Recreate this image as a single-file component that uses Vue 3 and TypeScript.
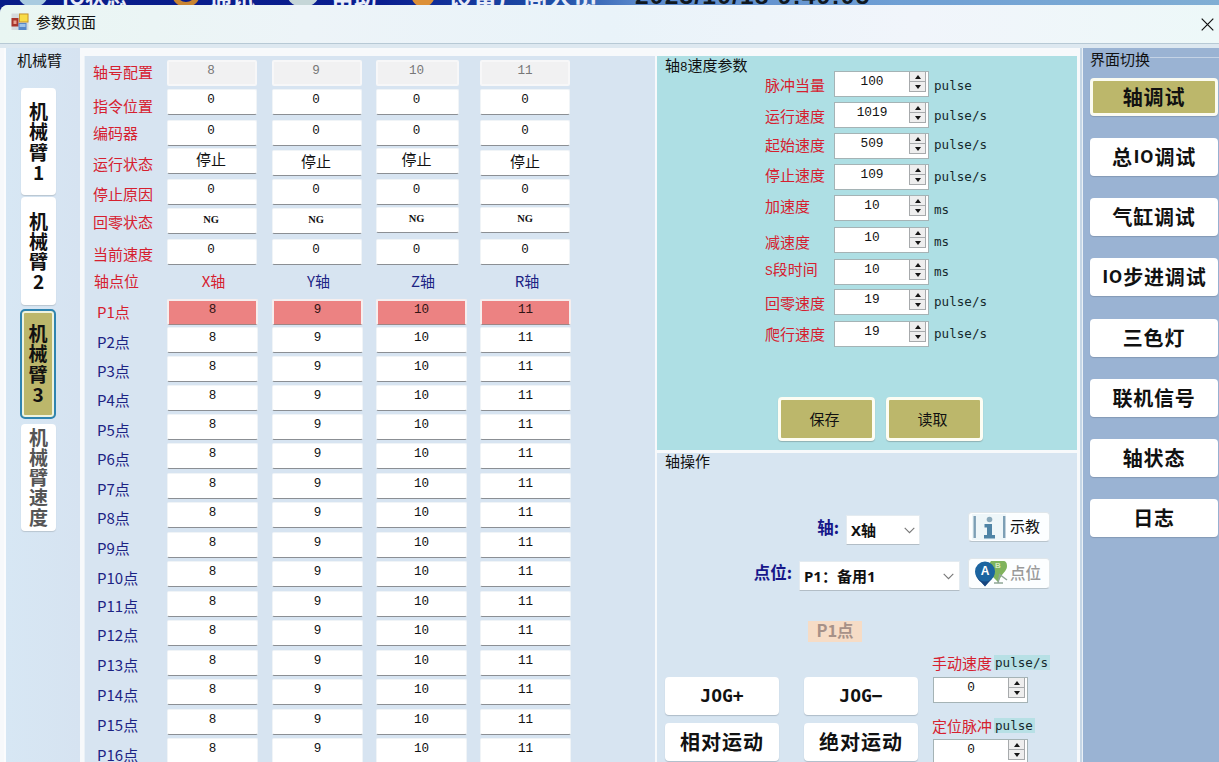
<script setup lang="ts">
interface Placed { text: string; gap: number; kind: string }

/* Turns a list of start offsets into the gaps between stacked boxes. */
function stack(texts: string[], starts: number[], height: number, origin: number, kinds: string[] = []): Placed[] {
  let end = origin
  return texts.map((text, i) => {
    const gap = starts[i] - end
    end = starts[i] + height
    return { text, gap, kind: kinds[i] ?? '' }
  })
}

/* Splits a caption into Latin and Chinese runs. */
function runs(text: string) {
  return (text.match(/[\x20-\x7e]+|[^\x20-\x7e]+/g) ?? []).map(t => ({ t, latin: /^[\x20-\x7e]/.test(t) }))
}

const gap = (n: number) => ({ marginTop: n + 'px' })

const points = Array.from({ length: 16 }, (_, i) => `P${i + 1}点`)
const labels = stack(
  ['轴号配置', '指令位置', '编码器', '运行状态', '停止原因', '回零状态', '当前速度', '轴点位', ...points],
  [72, 106, 133, 164, 194, 222, 254, 281, 312, 342, 371, 400, 430, 459, 489, 518, 548, 578, 606, 635, 665, 695, 725, 755].map(y => y - 10),
  20, 56,
  [...Array(7).fill('red'), 'red in', 'red in2', ...Array(15).fill('navy in2')],
)

const pointTops = [299, 327, 356, 385, 414, 443, 473, 502, 532, 561, 591, 620, 650, 679, 709, 738]
function column(no: string, tops: number[]): Placed[] {
  return stack([no, '0', '0', '停止', '0', 'NG', '0'], tops, 26, 56, ['off'])
}
const columns = [
  { id: 'x', axis: 'X轴', no: '8', top: column('8', [60, 89, 120, 148, 179, 208, 239]) },
  { id: 'y', axis: 'Y轴', no: '9', top: column('9', [60, 89, 120, 150, 179, 208, 239]) },
  { id: 'z', axis: 'Z轴', no: '10', top: column('10', [60, 89, 120, 148, 179, 207, 239]) },
  { id: 'r', axis: 'R轴', no: '11', top: column('11', [60, 89, 120, 150, 179, 207, 239]) },
].map(c => ({
  ...c,
  points: stack(points.map(() => c.no), pointTops, 26, 265 + 31, ['hot']),
}))

const arms = [
  { chars: [...'机械臂1'], cls: 'a1' },
  { chars: [...'机械臂2'], cls: 'a2' },
  { chars: [...'机械臂3'], cls: 'a3' },
  { chars: [...'机械臂速度'], cls: 'a4' },
]

const speedLabels = stack(
  ['脉冲当量', '运行速度', '起始速度', '停止速度', '加速度', '减速度', 'S段时间', '回零速度', '爬行速度'],
  [85, 116, 145, 175, 206, 242, 269, 303, 334].map(y => y - 10), 20, 56,
)
const speedInputs = stack(
  ['100', '1019', '509', '109', '10', '10', '10', '19', '19'],
  [71, 102, 133, 164, 195, 227, 259, 289, 321], 26, 56,
)
const speedUnits = stack(
  ['pulse', 'pulse/s', 'pulse/s', 'pulse/s', 'ms', 'ms', 'ms', 'pulse/s', 'pulse/s'],
  [86, 116, 145, 177, 210, 242, 272, 302, 334].map(y => y - 10), 20, 56,
)

const pages = stack(
  ['轴调试', '总IO调试', '气缸调试', 'IO步进调试', '三色灯', '联机信号', '轴状态', '日志'],
  [78, 138, 198, 258, 319, 379, 439, 499], 38, 68, ['on'],
)
</script>

<template>
  <div class="screen">
    <div class="backbar">
      <i class="blob b1"></i><span class="m1">IO状态</span>
      <i class="blob b2"></i><span class="m2">通讯</span>
      <i class="blob b3"></i><span class="m3">帮助</span>
      <i class="blob b4"></i><span class="m4">设备厂商人员</span>
      <span class="clock">2023/10/18 9:49:05</span>
    </div>
    <div class="window">
      <header class="title">
        <svg class="logo" width="18" height="18" viewBox="0 0 18 18">
          <rect x=".5" y=".5" width="17" height="16.500" fill="#d5dadd" />
          <rect x="8" y=".5" width="9.500" height="9" fill="#c9962a" />
          <rect x="9" y="1.500" width="7.500" height="7" fill="#f8dc48" />
          <rect x=".5" y="5" width="7" height="8.500" fill="#a8352c" />
          <rect x="2.500" y="7.500" width="3" height="3.500" fill="#e7a08f" />
          <rect x="7.500" y="10" width="8" height="7" fill="#5687c8" />
          <rect x="8.500" y="11" width="6" height="3" fill="#9fc2e8" />
        </svg>
        <span>参数页面</span>
        <svg class="close" width="13" height="13" viewBox="0 0 13 13"><path d="M.7.7l11.6 11.6M12.3.7L.7 12.3" stroke="#111" stroke-width="1.2" fill="none" /></svg>
      </header>

      <main class="body">
        <aside class="arms">
          <div class="caption">机械臂</div>
          <button v-for="a in arms" :key="a.cls" class="arm" :class="a.cls">
            <span v-for="(c, i) in a.chars" :key="i">{{ c }}</span>
          </button>
        </aside>

        <section class="table">
          <div class="labels">
            <div v-for="l in labels" :key="l.text" class="label" :class="l.kind" :style="gap(l.gap)">{{ l.text }}</div>
          </div>
          <div v-for="c in columns" :key="c.id" class="col" :class="'col-' + c.id">
            <div v-for="(f, i) in c.top" :key="i" class="field upper" :class="[f.kind, { cn: f.text === '停止', ng: f.text === 'NG' }]" :style="gap(f.gap)">{{ f.text }}</div>
            <div class="axis">{{ c.axis }}</div>
            <div v-for="(f, i) in c.points" :key="'p' + i" class="field" :class="f.kind" :style="gap(f.gap)">{{ f.text }}</div>
          </div>
        </section>

        <section class="center">
          <div class="speed">
            <div class="group-name">轴<i>8</i>速度参数</div>
            <div class="speed-labels">
              <div v-for="l in speedLabels" :key="l.text" class="red line" :style="gap(l.gap)"><span v-for="(r, j) in runs(l.text)" :key="j" :class="{ small: r.latin }">{{ r.t }}</span></div>
            </div>
            <div class="speed-inputs">
              <div v-for="(f, i) in speedInputs" :key="i" class="spin" :style="gap(f.gap)">
                <span>{{ f.text }}</span>
                <div class="arrows"><b class="up"></b><b class="down"></b></div>
              </div>
            </div>
            <div class="speed-units">
              <div v-for="(u, i) in speedUnits" :key="i" class="unit line" :style="gap(u.gap)">{{ u.text }}</div>
            </div>
            <div class="speed-actions">
              <button class="olive">保存</button>
              <button class="olive">读取</button>
            </div>
          </div>

          <div class="ops">
            <div class="ops-name">轴操作</div>
            <div class="ops-row row-axis">
              <label>轴:</label>
              <div class="select sel-axis"><span>X轴</span><svg width="11" height="7" viewBox="0 0 11 7"><path d="M.7.8l4.8 4.8L10.300.8" fill="none" stroke="#777" stroke-width="1.1" /></svg></div>
              <button class="tool">
                <svg width="36" height="26" viewBox="0 0 36 26">
                  <rect x="0" y="0" width="34" height="26" fill="#eef6f9" />
                  <rect x="1.500" y="2" width="2.400" height="22" fill="#7d9fb5" />
                  <rect x="31" y="2" width="2.400" height="22" fill="#7d9fb5" />
                  <circle cx="17.500" cy="5.500" r="2.800" fill="#8aa9bb" />
                  <path d="M12.500 10h7.500v11h3v3.500H12V21h3v-7.500h-2.500z" fill="#4f84a6" />
                </svg>
                <span>示教</span>
              </button>
            </div>
            <div class="ops-row row-point">
              <label>点位:</label>
              <div class="select sel-point"><span>P1：备用1</span><svg width="11" height="7" viewBox="0 0 11 7"><path d="M.7.8l4.8 4.8L10.300.8" fill="none" stroke="#777" stroke-width="1.1" /></svg></div>
              <button class="tool dim">
                <svg width="36" height="27" viewBox="0 0 36 27">
                  <path d="M19 1h12c3 0 4 2 4 5 0 4-3 6-5 9l-4 7-5-5c-3-5-6-12-2-16z" fill="#7fb35c" />
                  <path d="M27 14l8 6M28 14l-2 9M22 23h9" stroke="#8fa697" stroke-width="1.500" fill="none" />
                  <path d="M13 26l-4-4C5 19 3 15 3 11.500a10 10 0 0 1 20 0c0 4-2 7-6 10z" fill="#1b64a0" />
                  <path d="M4.500 15.500a9 9 0 0 0 17 0c-1 3-3 5-5 7l-3.500 4-4-4.500c-2-1-4-4-4.500-6.500z" fill="#17457e" />
                  <text x="13" y="15" text-anchor="middle" class="pin">A</text>
                  <text x="26" y="8" text-anchor="middle" class="pin2">B</text>
                </svg>
                <span>点位</span>
              </button>
            </div>
            <div class="badge">P1点</div>
            <div class="moves">
              <div class="move-grid">
                <button class="big"><span class="jog">JOG+</span></button>
                <button class="big"><span class="jog">JOG−</span></button>
                <button class="big">相对运动</button>
                <button class="big">绝对运动</button>
              </div>
              <div class="manual">
                <div class="manual-name"><span class="red">手动速度</span><span class="unit tag">pulse/s</span></div>
                <div class="spin"><span>0</span><div class="arrows"><b class="up"></b><b class="down"></b></div></div>
                <div class="manual-name second"><span class="red">定位脉冲</span><span class="unit tag">pulse</span></div>
                <div class="spin"><span>0</span><div class="arrows"><b class="up"></b><b class="down"></b></div></div>
              </div>
            </div>
          </div>
        </section>

        <nav class="pages">
          <div class="pages-name"><span>界面切换</span></div>
          <button v-for="p in pages" :key="p.text" class="page" :class="p.kind" :style="gap(p.gap)">
            <span v-for="(r, j) in runs(p.text)" :key="j" :class="{ latin: r.latin }">{{ r.t }}</span>
          </button>
        </nav>
      </main>
    </div>
  </div>
</template>

<style>
body { margin: 0; overflow: hidden; }
</style>

<style scoped>
* { box-sizing: border-box; }
.screen {
  width: 1219px; height: 762px; overflow: hidden;
  display: flex; flex-direction: column;
  font-family: "Noto Sans CJK SC", "Noto Sans", sans-serif;
  font-size: 15px; color: #111; background: #0b1c86; white-space: nowrap;
}
button { font-family: inherit; color: inherit; padding: 0; margin: 0; border: 0; display: flex; align-items: center; justify-content: center; }
i { font-style: normal; }

.backbar {
  flex: none; height: 5px; overflow: hidden; display: flex; align-items: flex-end;
  background: linear-gradient(90deg, #081c88 0, #0a1e90 380px, #1f50a8 560px, #5b89cc 640px, #6f9fd4 900px, #80aed4 1219px);
  font-weight: 700; font-size: 21px; line-height: 26px; color: #e8ecf8;
}
.backbar span { flex: none; height: 26px; margin-bottom: -4px; }
.blob { flex: none; height: 26px; margin-bottom: -2px; border-radius: 50%; }
.b1 { width: 30px; margin-left: 18px; background: #a9cbe0; }
.m1 { margin-left: 14px; width: 84px; }
.b2 { width: 28px; margin-left: 26px; border: 5px solid #c98532; }
.m2 { margin-left: 9px; width: 48px; font-size: 23px; }
.b3 { width: 32px; margin-left: 30px; background: #c5d6d8; }
.m3 { margin-left: 12px; width: 52px; font-size: 23px; }
.b4 { width: 24px; margin-left: 28px; background: #dc9038; }
.m4 { margin-left: 13px; width: 154px; font-size: 25px; }
.clock { margin-left: 33px; color: #101820; font-size: 24.5px; font-family: "Liberation Sans", sans-serif; letter-spacing: 1.2px; }

.window { flex: 1; min-height: 0; display: flex; flex-direction: column; background: #d6e4f0; border-radius: 8px 0 0 0; overflow: hidden; }
.title {
  flex: none; height: 39px; display: flex; align-items: center; padding: 0 5px 4px 11px;
  background: linear-gradient(90deg, #e9f6f2, #edf4f8 25%, #e9f3f9 50%, #f1f5fb 75%, #edf8f8);
  border-bottom: 1px solid #b7c9d5;
}
.title span { margin: -1px 0 0 7px; }
.close { margin-left: auto; margin-top: 4px; }
.body { flex: 1; min-height: 0; display: flex; background: linear-gradient(#dde8f0 0 4px, #f7f9fb 4px); }

.arms { flex: none; width: 76px; margin-left: 4px; margin-top: 4px; border-left: 2px solid #fbfcfd; background: linear-gradient(90deg, #d7e7f4, #d6e3f1); display: flex; flex-direction: column; align-items: flex-start; padding-left: 15px; }
.caption { margin: 1px 0 0 -4px; height: 22px; line-height: 22px; }
.arm {
  flex: none; width: 35px; flex-direction: column; border-radius: 4px; background: #fff;
  font-size: 19px; font-weight: 700; box-shadow: 0 1px 1px #b9c5d0; line-height: 20.2px;
}
.arm span { display: block; height: 20.2px; }
.a1 { height: 107px; margin-top: 17px; }
.a2 { height: 108px; margin-top: 2px; }
.a3 { height: 110px; margin-top: 4px; background: #bcb76b; border: 2px solid #2f84b0; box-shadow: inset 0 0 0 2px #eef3df; border-radius: 5px; width: 36px; margin-left: -1px; padding-bottom: 1px; }
.a4 { height: 107px; margin-top: 5px; color: #555; padding-bottom: 1px; }

.table { flex: none; width: 571px; margin: 12px 0 0 4px; background: #d7e4f1; display: flex; border-left: 1px solid #eaf1f7; }
.labels { width: 82px; padding-left: 8px; }
.label { height: 20px; line-height: 19px; }
.red { color: #d6202f; }
.navy { color: #1c2384; }
.in { padding-left: 1px; }
.in2 { padding-left: 4px; }
.col { flex: none; }
.col-x { width: 91px; }
.col-y { width: 91px; margin-left: 14px; }
.col-z { width: 91px; margin-left: 13px; }
.col-r { width: 91px; margin-left: 13px; }
.field {
  height: 26px; background: #fff; border: 1px solid #f0f4f7; border-bottom-color: #8b8f94; border-radius: 2px;
  text-align: center; font: 12.6px/21px "Liberation Mono", "Noto Sans CJK SC", monospace;
  letter-spacing: -.1px;
}
.upper { margin-right: 1px; padding-right: 2px; }
.col-z .upper { margin-right: 8px; }
.col-r .upper { padding-right: 0; }
.off { background: #f1f1f2; color: #777; border: 2px solid #f7f7f8; line-height: 19px; }
.cn { font: 15px/20px "Noto Sans CJK SC", sans-serif; }
.ng { font-family: "Liberation Serif", serif; font-weight: 700; font-size: 10.5px; }
.hot { background: #ec8282; border: 2px solid #f6eeee; border-bottom: 1px solid #9d8585; line-height: 19px; color: #301414; }
.axis { height: 31px; line-height: 32px; text-align: center; color: #1c2384; padding-left: 2px; }
.col-x .axis { color: #d6202f; }
.col-z .axis, .col-r .axis { padding-left: 3px; }

.center { flex: none; width: 422px; margin-top: 12px; display: flex; flex-direction: column; padding-left: 2px; }
.speed { flex: none; height: 394px; background: #aedfe4; display: grid; grid-template-columns: 108px 69px 100px 1fr; grid-template-rows: 1fr 54px; }
.group-name { grid-area: 1 / 1; margin-left: 8px; height: 18px; line-height: 17px; width: 100px; }
.group-name i { font: 12.6px "Liberation Mono", monospace; }
.speed-labels { grid-area: 1 / 2; }
.line { height: 20px; line-height: 19px; }
.small { font: 13px "Liberation Mono", monospace; }
.spin {
  width: 95px; height: 26px; background: #fff; border: 1px solid #a5b3b5; display: flex; justify-content: space-between;
  font: 12.8px/20px "Liberation Mono", monospace;
}
.spin span { width: 74px; text-align: center; }
.arrows { width: 17px; margin-right: 2px; height: 20px; display: flex; flex-direction: column; gap: 1px; background: #a7aaac; }
.arrows b { flex: 1; margin: 0 1px; background: #eeeeee; display: flex; align-items: center; justify-content: center; }
.arrows b::before { content: ""; border: 3.5px solid transparent; }
.up::before { border-top-width: 0 !important; border-bottom: 4px solid #151515 !important; }
.down::before { border-bottom-width: 0 !important; border-top: 4px solid #151515 !important; }
.arrows b:last-child { border-bottom: 1px solid #a7aaac; }
.unit { font-family: "DejaVu Sans Mono", monospace; font-size: 12.6px; color: #16292c; }
.speed-actions { grid-area: 2 / 1 / 3 / 5; display: flex; gap: 11px; padding-left: 121px; align-items: flex-start; margin-top: 1px; }
.olive { width: 97px; height: 44px; background: #bcb76b; border: 3px solid #fdfdf3; border-radius: 4px; font-size: 15px; box-shadow: 0 1px 1px #8eb1b3; padding: 0 4px 2px 0; }

.ops { flex: 1; min-height: 0; margin-top: 3px; background: #d7e5f1; overflow: hidden; }
.ops-name { margin: -2px 0 0 8px; height: 21px; line-height: 19px; }
.ops-row { display: flex; }
.ops-row label { color: #16168a; font-weight: 700; font-size: 16.500px; text-align: right; line-height: 24px; }
.row-axis { margin-top: 40px; height: 46px; }
.row-axis label { width: 182px; margin-top: 3px; }
.row-point label { width: 135px; margin-top: 2px; }
.select { display: flex; justify-content: space-between; align-items: center; background: #fff; border: 1px solid #e4ebf0; border-bottom-color: #b2bdc6; font-family: "Noto Sans", "Noto Sans CJK SC", sans-serif; font-size: 15px; font-weight: 700; }
.select span { margin-top: -1px; }
.sel-axis { width: 74px; height: 30px; margin: 3px 0 0 7px; padding: 0 4px 0 4px; }
.sel-point { width: 161px; height: 30px; margin: 3px 0 0 7px; padding: 0 5px 0 4px; }
.tool { width: 82px; height: 30px; background: #fcfeff; border: 1px solid #dfe6ea; border-bottom-color: #b8c4cc; border-radius: 4px; font-size: 15px; justify-content: flex-start; padding-left: 3px; }
.row-axis .tool { margin-left: 48px; }
.row-point .tool { margin-left: 8px; height: 31px; }
.tool span { margin: -4px 0 0 2px; }
.dim span { color: #999; font-weight: 500; font-size: 15.5px; }
.pin { font: 700 12px "Liberation Sans", sans-serif; fill: #fff; }
.pin2 { font: 700 8px "Liberation Sans", sans-serif; fill: #d5e8c0; }
.badge { width: 54px; height: 21px; line-height: 19px; margin: 30px 0 0 151px; background: #f6dcc6; color: #a69188; font-weight: 700; font-size: 16.500px; text-align: center; }
.moves { display: flex; margin: 10px 0 0 8px; }
.move-grid { display: grid; grid-template-columns: 114px 114px; grid-template-rows: 38px 38px; gap: 8px 25px; margin-top: 25px; }
.big { background: #fff; border-radius: 4px; font-size: 20px; letter-spacing: 1px; font-weight: 700; box-shadow: 0 1px 1px #aebcc8; padding-bottom: 2px; }
.jog { font-family: "DejaVu Sans Mono", monospace; font-size: 18px; letter-spacing: 0; }
.latin { font-family: Roboto, sans-serif; font-size: 19px; letter-spacing: 1px; padding-left: 1px; }
.manual { margin-left: 14px; }
.manual .spin { margin-left: 1px; }
.manual-name { height: 25px; display: flex; align-items: center; padding-bottom: 5px; margin-bottom: 0; }
.second { margin: 12px 0 0; height: 24px; padding-bottom: 4px; }
.tag { background: #b7e0e5; margin-left: 2px; height: 15px; line-height: 15px; padding: 0 2px 0 1px; }

.pages {
  flex: none; width: 137px; margin-left: 6px; margin-top: 4px; padding-left: 7px; background: #9ab3d3;
  display: flex; flex-direction: column; box-shadow: -1px 0 0 #e9f0f6, -3px 0 0 #c5d6e6;
}
.pages-name { height: 20px; flex: none; background: linear-gradient(#c4d3e5, #c4d3e5) 0 9px / 100% 1px no-repeat; }
.pages-name span { display: inline-block; line-height: 15px; height: 18px; background: #9ab3d3; }
.page { flex: none; width: 128px; height: 38px; background: #fff; border-radius: 4px; font-size: 20px; letter-spacing: .8px; font-weight: 700; box-shadow: 0 1px 1px #8499b5; padding-bottom: 2px; }
.on { background: #bcb76b; border: 3px solid #fbfbf0; }
</style>
